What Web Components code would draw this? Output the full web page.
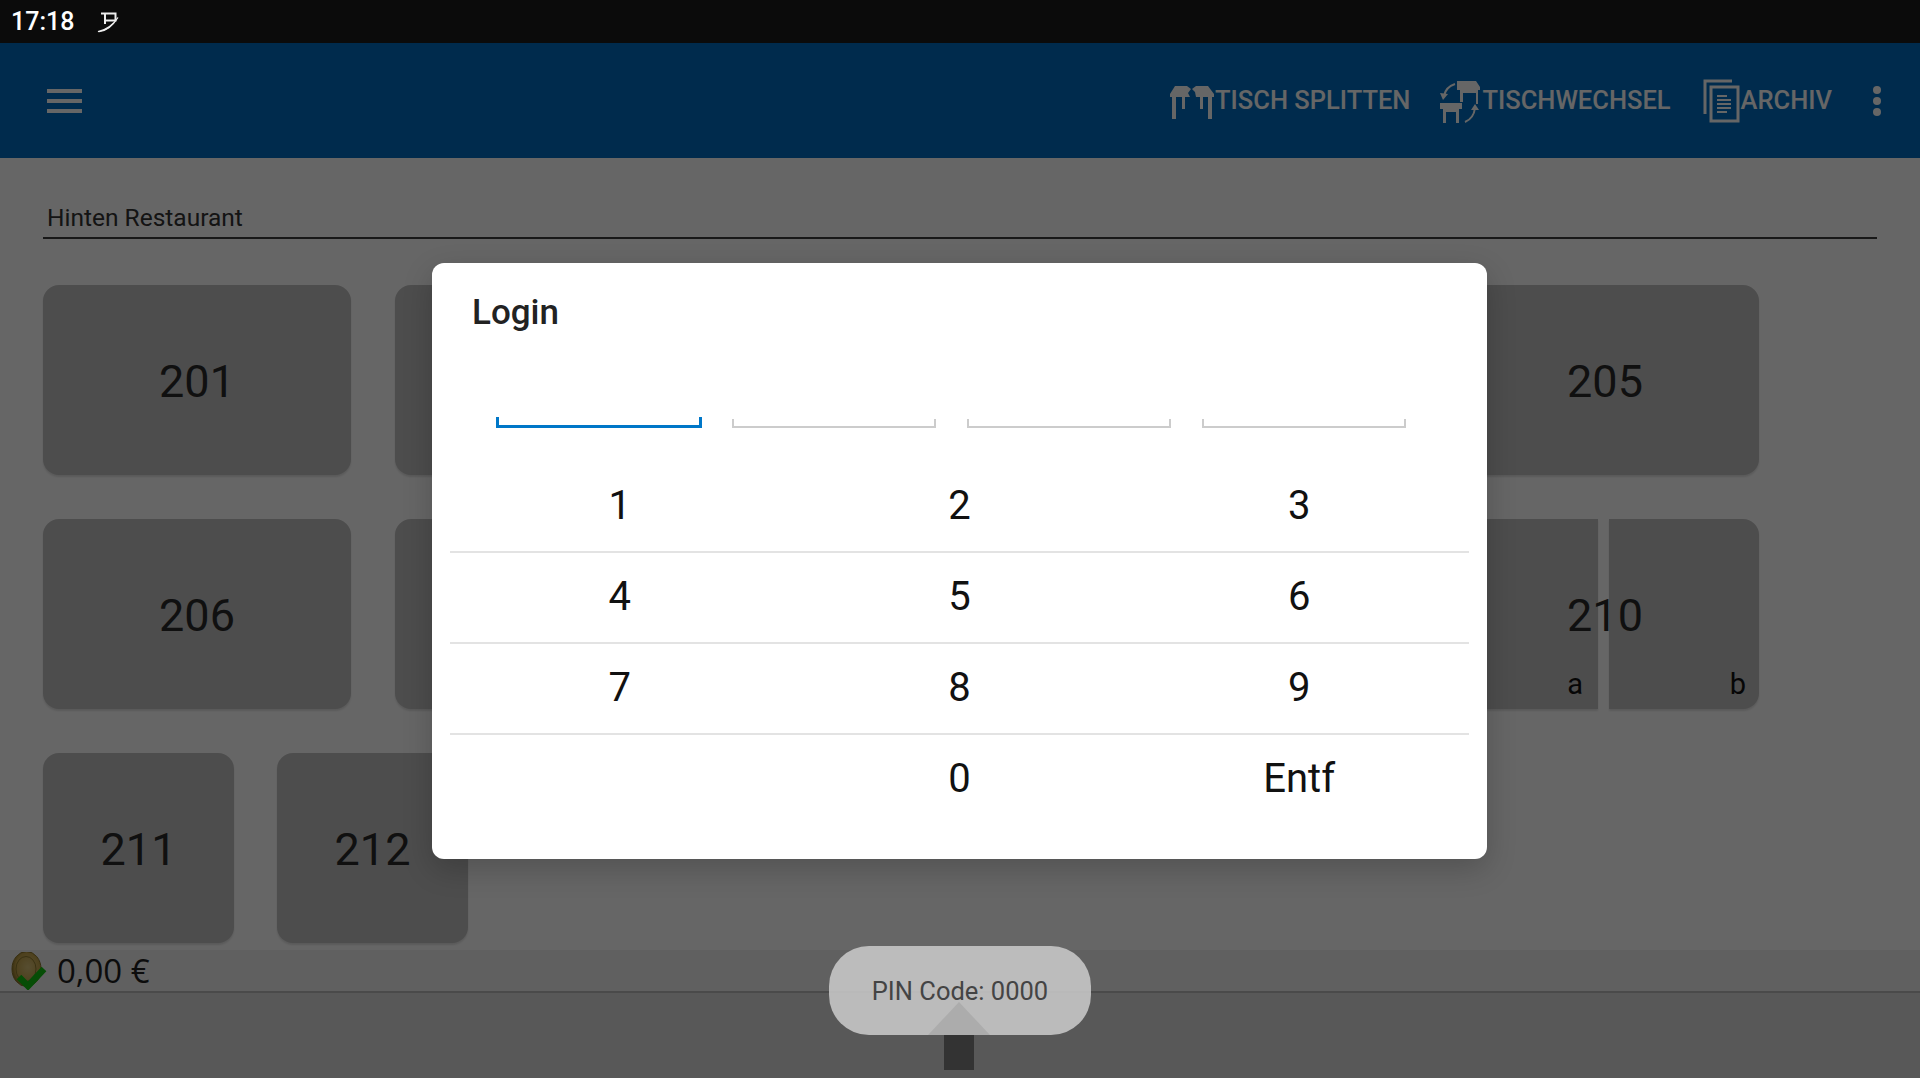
<!DOCTYPE html>
<html><head><meta charset="utf-8"><style>
html,body{margin:0;height:100%;overflow:hidden;background:#fff;font-family:Roboto,"Liberation Sans",sans-serif}
</style></head><body>
<template id="t-status"><style>
:host{display:flex;align-items:center;height:43px;background:#0b0b0b;color:#fff;font:500 25px/43px Roboto,sans-serif;padding-left:11px;position:relative;z-index:3;gap:22px}
svg{display:block}
</style><span>17:18</span><svg width="24" height="24" viewBox="0 0 24 24" fill="none" stroke="#eee"><path d="M5 3.500H19.500V10.500H9.500M9 4V14" stroke-width="2"/><path d="M2 21.500C9 22 16 17 22 7.500C17 15 11 19.500 2 21.500Z" stroke-width="1.200" fill="#eee"/></svg></template>

<template id="t-action"><style>
:host{display:flex;align-items:center;color:#fff;font:500 25.500px/1 Roboto,sans-serif;text-transform:uppercase}
</style><slot name="icon"></slot><slot></slot></template>

<template id="t-toolbar"><style>
:host{display:flex;align-items:center;height:115px;background:#006dc0;color:#fff;box-sizing:border-box;padding:0 36px 0 47px}
.burger{width:35px;height:24px;display:flex;flex-direction:column;justify-content:space-between;margin-right:auto}
.burger i{display:block;height:4px;background:#fff}
.acts{display:flex;align-items:center}
.dots{display:flex;flex-direction:column;gap:3px;margin-left:38px;width:14px;align-items:center}
.dots i{width:8px;height:8px;border-radius:50%;background:#fff}
::slotted(table-action){margin-left:28px}
</style><div class="burger"><i></i><i></i><i></i></div><div class="acts"><slot></slot></div><div class="dots"><i></i><i></i><i></i></div></template>

<template id="t-tile"><style>
:host{display:block;position:relative;width:308px;height:190px;background:#c0c0c0;border-radius:16px;box-shadow:0 2px 2px rgba(0,0,0,.12);color:#2a2a2a;font:400 45px/190px Roboto,sans-serif;text-align:center;flex:none;overflow:hidden}
:host([small]){width:191px}
span{display:block;padding-top:2px}
</style><span><slot></slot></span></template>

<template id="t-split"><style>
:host{display:block;position:relative;width:308px;height:190px;flex:none;color:#2a2a2a;font:400 45px/190px Roboto,sans-serif;text-align:center}
.parts{display:flex;height:100%;justify-content:space-between}
.p{background:#c0c0c0;height:100%;position:relative;font:400 29px/1 Roboto,sans-serif;box-shadow:0 2px 2px rgba(0,0,0,.12)}
.a{width:147px;border-radius:16px 0 0 16px}
.b{width:150px;border-radius:0 16px 16px 0}
.p span{position:absolute;right:13px;bottom:10px;color:#111}
.a span{right:15px}
.n{position:absolute;inset:2px 0 0 0}
</style><div class="parts"><div class="p a"><span>a</span></div><div class="p b"><span>b</span></div></div><div class="n"><slot></slot></div></template>

<template id="t-floor"><style>
:host{display:block;box-sizing:border-box;height:792px;padding:0 43px;background:#fff}
.title{height:81px;box-sizing:border-box;padding:0 0 0 4px;border-bottom:2px solid #3c3c3c;width:1834px;color:#333;font:400 24.500px/30px Roboto,sans-serif;display:flex;align-items:flex-end;padding-bottom:4px}
.grid{display:flex;flex-direction:column;gap:44px;padding-top:46px}
</style><div class="title"><slot name="title"></slot></div><div class="grid"><slot></slot></div></template>

<template id="t-row"><style>:host{display:flex;gap:44px}:host([tight]){gap:43px}</style><slot></slot></template>

<template id="t-bottom"><style>
:host{display:block;height:128px;background:#ededed;margin-top:0}
.sum{height:41px;display:flex;align-items:center;border-bottom:2px solid #b9b9b9;background:#efefef;padding-left:11px;color:#1f1f1f;font:400 33px/1 "Open Sans",Roboto,sans-serif;gap:10px}
svg{display:block}
.rest{height:85px;background:#dcdcdc}
</style><div class="sum"><svg width="36" height="38" viewBox="0 0 36 38"><defs><radialGradient id="c" cx=".55" cy=".45" r=".6"><stop offset="0" stop-color="#d9c27a"/><stop offset=".7" stop-color="#c2a24a"/><stop offset="1" stop-color="#7d6620"/></radialGradient></defs><ellipse cx="15.500" cy="17" rx="14.500" ry="17.500" fill="url(#c)" stroke="#8a7328" stroke-width="1"/><ellipse cx="15" cy="17" rx="10" ry="12.500" fill="none" stroke="#8e7a30" stroke-width="1"/><path d="M8 25L17 34L33 17" fill="none" stroke="#10c010" stroke-width="6.500"/></svg><slot></slot></div><div class="rest"></div></template>

<template id="t-scrim"><style>:host{position:absolute;left:0;right:0;top:43px;bottom:2px;background:rgba(0,0,0,.6);z-index:1}</style></template>

<template id="t-dialog"><style>
:host{position:absolute;left:432px;top:263px;width:1055px;height:596px;box-sizing:border-box;background:#fff;border-radius:12px;z-index:2;padding:0 18px 0 18px;display:block;box-shadow:0 10px 30px rgba(0,0,0,.2)}
h2{margin:0;padding:29px 0 0 22px;height:68px;box-sizing:border-box;font:500 35px/42px Roboto,sans-serif;color:#222}
.pins{display:flex;padding:0 0 0 46px;gap:31px;height:97px;align-items:flex-end}
.keys{display:grid;grid-template-columns:repeat(3,1fr);margin-top:0;padding-top:34px}
::slotted(pin-key:nth-of-type(n+10)){border-bottom:0}
</style><h2><slot name="title"></slot></h2><div class="pins"><slot name="pin"></slot></div><div class="keys"><slot></slot></div></template>

<template id="t-pin"><style>
:host{display:block;box-sizing:border-box;width:204px;height:9px;border:2px solid #ccc;border-top:0}
:host([active]){width:206px;height:11px;border-color:#0077c8;border-width:0 3px 3px 3px;margin-right:-1px}
</style></template>

<template id="t-key"><style>
:host{display:block;height:91px;box-sizing:border-box;border-bottom:2px solid #e3e3e3;color:#111;font:400 40px/87px Roboto,sans-serif;text-align:center}
</style><slot></slot></template>

<template id="t-toast"><style>
:host{position:absolute;left:829px;top:946px;width:262px;height:89px;background:rgba(200,200,200,.88);border-radius:40px;z-index:2;display:flex;align-items:center;justify-content:center;color:#444;font:400 25.500px/1 Roboto,sans-serif;padding-top:2px;box-sizing:border-box}
.tri{position:absolute;left:99px;bottom:0;width:0;height:0;border-left:31px solid transparent;border-right:31px solid transparent;border-bottom:33px solid rgba(160,160,160,.55)}
.bar{position:absolute;left:115px;top:89px;width:30px;height:35px;background:#333}
</style><slot></slot><div class="tri"></div><div class="bar"></div></template>

<status-bar></status-bar>
<app-toolbar>
 <table-action><svg slot="icon" width="46" height="38" viewBox="0 0 46 38" fill="#fff"><path d="M1 12L6 4H18L22 7L19 11L21 15H7V37H3V15H1ZM13 15H16V27H13Z"/><path d="M45 12V15H43V37H39V15H27L26 10L23 7L27 4H39ZM31 15H34V27H31Z"/></svg>Tisch splitten</table-action>
 <table-action><svg slot="icon" width="44" height="46" viewBox="0 0 44 46" fill="#fff"><path d="M19 3H38L42 9V12H40V26H38V15H25V24H22V12H19Z"/><path d="M2 25H24V31H21V45H18V34H8V45H5V31H2Z"/><path d="M17 6C11 8 7 12 6 18" fill="none" stroke="#fff" stroke-width="2"/><path d="M2 15L10 16L5 22Z"/><path d="M27 44C32 42 36 38 37 30" fill="none" stroke="#fff" stroke-width="2"/><path d="M33 32L41 32L37 26Z"/></svg>Tischwechsel</table-action>
 <table-action style="margin-left:32px"><svg slot="icon" width="38" height="44" viewBox="0 0 38 44" fill="none" stroke="#fff"><path d="M29 2H2V35" stroke-width="3"/><path d="M8 8H35V42H8Z" stroke-width="3"/><path d="M14 17H24M14 21H28M14 25H28M14 29H28M14 33H24" stroke-width="2"/></svg>Archiv</table-action>
</app-toolbar>
<floor-plan>
 <span slot="title">Hinten Restaurant</span>
 <tile-row><table-tile>201</table-tile><table-tile>202</table-tile><table-tile>203</table-tile><table-tile>204</table-tile><table-tile>205</table-tile></tile-row>
 <tile-row><table-tile>206</table-tile><table-tile>207</table-tile><table-tile>208</table-tile><table-tile>209</table-tile><split-tile>210</split-tile></tile-row>
 <tile-row tight><table-tile small>211</table-tile><table-tile small>212</table-tile></tile-row>
</floor-plan>
<bottom-bar>0,00 €</bottom-bar>
<page-scrim></page-scrim>
<login-dialog>
 <span slot="title">Login</span>
 <pin-field slot="pin" active></pin-field><pin-field slot="pin"></pin-field><pin-field slot="pin"></pin-field><pin-field slot="pin"></pin-field>
 <pin-key>1</pin-key><pin-key>2</pin-key><pin-key>3</pin-key><pin-key>4</pin-key><pin-key>5</pin-key><pin-key>6</pin-key><pin-key>7</pin-key><pin-key>8</pin-key><pin-key>9</pin-key><pin-key></pin-key><pin-key>0</pin-key><pin-key>Entf</pin-key>
</login-dialog>
<pin-toast>PIN Code: 0000</pin-toast>
<script>
const map={'status-bar':'t-status','table-action':'t-action','app-toolbar':'t-toolbar','table-tile':'t-tile','split-tile':'t-split','floor-plan':'t-floor','tile-row':'t-row','bottom-bar':'t-bottom','page-scrim':'t-scrim','login-dialog':'t-dialog','pin-field':'t-pin','pin-key':'t-key','pin-toast':'t-toast'};
for(const [n,t] of Object.entries(map)){
 customElements.define(n,class extends HTMLElement{constructor(){super();this.attachShadow({mode:'open'}).appendChild(document.getElementById(t).content.cloneNode(true));}});
}
</script>
</body></html>
